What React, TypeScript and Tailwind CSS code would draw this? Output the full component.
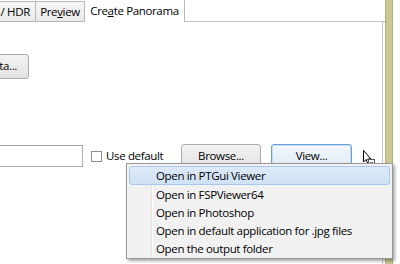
import React from 'react';

const font = { fontFamily: '"Open Sans", "Noto Sans", sans-serif' };

const menuItems = [
  'Open in PTGui Viewer',
  'Open in FSPViewer64',
  'Open in Photoshop',
  'Open in default application for .jpg files',
  'Open the output folder',
];

function Cursor() {
  return (
    <svg width="14" height="18" viewBox="0 0 14 18" className="block">
      <path d="M1.5 1.5 L1.5 13 L4 10.5 L6 15 L7.6 14.3 L5.7 10 L9 10 Z" fill="#fff" stroke="#000" strokeWidth="1" strokeLinejoin="round" />
      <rect x="6.5" y="10.5" width="6" height="6" fill="#fff" stroke="#555" strokeWidth="1" />
      <path d="M8 13.5 H11" stroke="#777" strokeWidth="1" />
    </svg>
  );
}

export default function App() {
  return (
    <div className="w-[400px] h-[264px] bg-white overflow-hidden relative flex text-[11.5px] text-black tracking-[-0.35px]" style={font}>
      {/* window content */}
      <div className="w-[385px] flex flex-col">
        {/* tabs */}
        <div className="h-[22px] flex items-end">
          <div className="w-[36px] h-[21px] border border-l-0 border-[#b9b9b9] bg-gradient-to-b from-[#f6f6f6] to-[#e9e9e9] flex items-center justify-end pr-[5px] pt-[1px] whitespace-nowrap">
            / HDR
          </div>
          <div className="w-[49px] h-[21px] border border-l-0 border-[#b9b9b9] bg-gradient-to-b from-[#f6f6f6] to-[#e9e9e9] flex items-center justify-center pt-[1px]">
            Pre<span className="underline">v</span>iew
          </div>
          <div className="w-[100px] h-[22px] border-r border-[#b9b9b9] bg-white flex items-center justify-center whitespace-nowrap pb-[1px]">
            Cre<span className="underline">a</span>te Panorama
          </div>
          <div className="flex-1 h-[22px] border-b border-[#c4c4c4]" />
        </div>

        {/* panel */}
        <div className="flex-1 w-[383px] border-r border-[#c4c4c4] flex flex-col">
          <div className="mt-[32px] ml-[-60px] w-[89px] h-[25px] border border-[#adadad] rounded-[3px] bg-gradient-to-b from-[#f3f3f3] to-[#e3e3e3] flex items-center justify-end pr-[11px] pb-[1px]">
            Data...
          </div>

          <div className="mt-[65px] flex items-center">
            <div className="ml-[-40px] w-[123px] h-[22px] border border-[#abadb3] border-t-[#a0a3aa] bg-white" />
            <div className="w-[98px] flex items-center pl-[8px]">
              <div className="w-[11px] h-[11px] border border-[#8e8f8f] bg-white" />
              <span className="ml-[4px] whitespace-nowrap">Use default</span>
            </div>
            <div className="w-[80px] h-[24px] border border-[#adadad] rounded-[3px] bg-gradient-to-b from-[#f3f3f3] to-[#e3e3e3] flex items-center justify-center pb-[1px]">
              Browse...
            </div>
            <div className="ml-[10px] w-[81px] h-[24px] border border-[#6aa0d6] rounded-[3px] bg-gradient-to-b from-[#f2f7fc] to-[#e1ebf5] shadow-[inset_0_0_0_1px_#c6def4] flex items-center justify-center pb-[1px]">
              View...
            </div>
            <div className="ml-[10px] mt-[4px]">
              <Cursor />
            </div>
          </div>
        </div>
      </div>

      {/* scrollbar-ish strip */}
      <div className="w-[8px] h-full bg-[#cbc797] border-l border-[#b3b07c] border-r border-[#a9a674]" />
      <div className="flex-1 bg-white" />

      {/* context menu */}
      <div className="absolute left-[126px] top-[163px] w-[267px] h-[96px] bg-[#f1f1f1] border border-[#979797] shadow-[2px_2px_3px_rgba(0,0,0,0.35)] p-[2px] flex flex-col">
        <div className="absolute left-[24px] top-0 bottom-0 w-px bg-[#e2e3e3]" />
        <div className="absolute left-[25px] top-0 bottom-0 w-px bg-white" />
        {menuItems.map((item, i) => (
          <div
            key={item}
            className={
              i === 0
                ? 'relative h-[18.5px] border border-[#a8c9ed] rounded-[3px] bg-gradient-to-b from-[#dce9f7] to-[#d0e2f5] flex items-center pl-[26px] pt-px'
                : 'relative h-[18.3px] flex items-center pl-[27px] pt-px'
            }
          >
            <span className="whitespace-nowrap">{item}</span>
          </div>
        ))}
      </div>
    </div>
  );
}
